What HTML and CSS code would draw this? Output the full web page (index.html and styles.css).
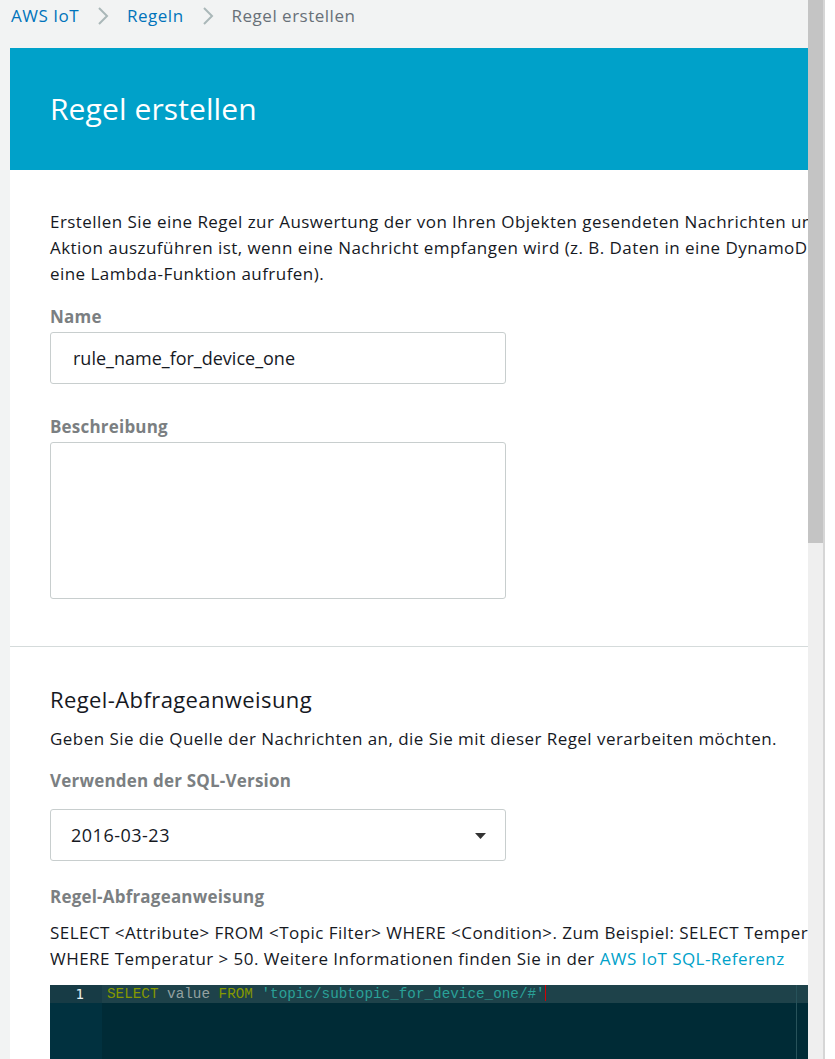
FILE: index.html
```html
<!DOCTYPE html>
<html lang="de">
<head>
<meta charset="utf-8">
<title>Regel erstellen</title>
<link rel="stylesheet" href="styles.css">
</head>
<body>
<div class="page">
  <div class="viewport">
    <nav class="crumbs">
      <a class="crumb-link" href="#">AWS IoT</a>
      <svg class="chev" viewBox="0 0 12 20" width="12" height="20"><path d="M2 2 L10 10 L2 18" fill="none" stroke="#aab7b8" stroke-width="2"/></svg>
      <a class="crumb-link" href="#">Regeln</a>
      <svg class="chev" viewBox="0 0 12 20" width="12" height="20"><path d="M2 2 L10 10 L2 18" fill="none" stroke="#aab7b8" stroke-width="2"/></svg>
      <span class="crumb-current">Regel erstellen</span>
    </nav>
    <div class="panel">
      <header class="panel-head">
        <h1 class="panel-title">Regel erstellen</h1>
      </header>
      <section class="section first">
        <p class="text">Erstellen Sie eine Regel zur Auswertung der von Ihren Objekten gesendeten Nachrichten und geben Sie an, welche<br>Aktion auszuführen ist, wenn eine Nachricht empfangen wird (z. B. Daten in eine DynamoDB-Tabelle schreiben oder<br>eine Lambda-Funktion aufrufen).</p>
        <label class="label lbl-name">Name</label>
        <div class="input">rule_name_for_device_one</div>
        <label class="label lbl-desc">Beschreibung</label>
        <div class="textarea"></div>
      </section>
      <section class="section second">
        <h2 class="heading">Regel-Abfrageanweisung</h2>
        <p class="text sub">Geben Sie die Quelle der Nachrichten an, die Sie mit dieser Regel verarbeiten möchten.</p>
        <label class="label lbl-sql">Verwenden der SQL-Version</label>
        <div class="select">
          <span>2016-03-23</span>
          <svg class="caret" viewBox="0 0 11 6" width="11" height="6"><path d="M0 0 L11 0 L5.5 6 Z" fill="#333"/></svg>
        </div>
        <label class="label lbl-query">Regel-Abfrageanweisung</label>
        <p class="text query-help">SELECT &lt;Attribute&gt; FROM &lt;Topic Filter&gt; WHERE &lt;Condition&gt;. Zum Beispiel: SELECT Temperatur FROM 'iot/topic'<br>WHERE Temperatur &gt; 50. Weitere Informationen finden Sie in der <a class="link" href="#">AWS IoT SQL-Referenz</a></p>
        <div class="editor">
          <div class="gutter">
            <div class="gutter-line active">1</div>
          </div>
          <div class="code">
            <div class="code-line active"><span class="kw">SELECT</span> <span class="id">value</span> <span class="kw">FROM</span> <span class="str">'topic/subtopic_for_device_one/#'</span><span class="cursor"></span></div>
            <div class="print-margin"></div>
          </div>
        </div>
      </section>
    </div>
  </div>
  <div class="scrollbar"><div class="thumb"></div></div>
  <div class="edge"></div>
</div>
</body>
</html>
```
FILE: styles.css
```css
* { box-sizing: border-box; }
html, body { margin: 0; padding: 0; }
body {
  background: #f2f3f3;
  font-family: "Open Sans", "Noto Sans", "Liberation Sans", sans-serif;
  color: #16191f;
}
.page {
  display: flex;
  width: 835px;
  height: 1059px;
  overflow: hidden;
}
.viewport {
  width: 808px;
  flex: none;
  overflow: hidden;
  padding-left: 10px;
}
.crumbs {
  height: 48px;
  display: flex;
  align-items: flex-start;
  gap: 18px;
  padding-top: 4px;
  margin-left: 1px;
  font-size: 17px;
  letter-spacing: 0.5px;
  line-height: 24px;
  white-space: nowrap;
}
.chev { margin-top: 2px; }
.crumb-link { color: #0073bb; text-decoration: none; }
.crumb-current { color: #687078; }
.panel {
  width: 900px;
  background: #fff;
}
.panel-head {
  height: 122px;
  background: #00a1c9;
  display: flex;
  align-items: center;
  padding-left: 40px;
}
.panel-title {
  margin: 0;
  color: #fff;
  font-weight: 400;
  font-size: 30px;
  letter-spacing: 0.1px;
  line-height: 36px;
}
.section {
  padding-left: 40px;
  display: flex;
  flex-direction: column;
  align-items: flex-start;
}
.section.first {
  padding-top: 39px;
  padding-bottom: 47px;
  border-bottom: 1px solid #d5dbdb;
}
.section.second { padding-top: 37px; }
.text {
  margin: 0;
  font-size: 17px;
  letter-spacing: 0.45px;
  line-height: 26px;
  white-space: nowrap;
}
.label {
  display: block;
  font-size: 17px;
  letter-spacing: 0.2px;
  line-height: 20px;
  font-weight: 700;
  color: #7b7f82;
}
.lbl-name { margin-top: 20px; }
.input {
  margin-top: 5px;
  width: 456px;
  height: 52px;
  border: 1px solid #c8cece;
  border-radius: 3px;
  padding-left: 22px;
  font-size: 18px;
  line-height: 50px;
  color: #16191f;
}
.lbl-desc { margin-top: 33px; }
.textarea {
  margin-top: 5px;
  width: 456px;
  height: 157px;
  border: 1px solid #c8cece;
  border-radius: 3px;
}
.heading {
  margin: 0;
  font-size: 22px;
  letter-spacing: 0.4px;
  line-height: 30px;
  font-weight: 400;
  color: #16191f;
}
.sub { margin-top: 12px; }
.lbl-sql { margin-top: 19px; }
.select {
  margin-top: 18px;
  width: 456px;
  height: 52px;
  border: 1px solid #c8cece;
  border-radius: 3px;
  padding: 0 19px 0 20px;
  display: flex;
  align-items: center;
  justify-content: space-between;
  font-size: 18px;
  letter-spacing: 0.5px;
}
.caret { margin-top: 1px; }
.lbl-query { margin-top: 26px; }
.query-help { margin-top: 13px; }
.link { color: #00a1c9; text-decoration: none; }
.editor {
  margin-top: 13px;
  width: 758px;
  height: 120px;
  background: #002b36;
  display: flex;
  border-radius: 2px 0 0 0;
}
.gutter {
  width: 52px;
  flex: none;
  background: #01313f;
}
.gutter-line {
  height: 18px;
  line-height: 18px;
  text-align: right;
  padding-right: 18px;
  font-family: "DejaVu Sans Mono", "Liberation Mono", monospace;
  font-size: 14px;
  color: #e6f0f0;
}
.gutter-line.active { background: #173b45; }
.code {
  flex: 1;
  position: relative;
}
.code-line {
  height: 18px;
  line-height: 18px;
  padding-left: 5px;
  font-family: "Liberation Mono", "DejaVu Sans Mono", monospace;
  font-size: 14.3px;
  white-space: pre;
  color: #93a1a1;
}
.code-line.active { background: #1e424a; }
.kw { color: #859900; }
.id { color: #93a1a1; }
.str { color: #2aa198; }
.cursor {
  display: inline-block;
  width: 1px;
  height: 16px;
  vertical-align: -3px;
  background: #d30102;
}
.print-margin {
  position: absolute;
  top: 0;
  bottom: 0;
  left: 694px;
  width: 1px;
  background: #27525a;
}
.scrollbar {
  width: 17px;
  flex: none;
  background: #efefef;
  border-right: 2px solid #d6d6d6;
}
.thumb {
  height: 543px;
  background: #c4c4c4;
}
.edge {
  flex: 1;
  background: #fff;
}
```
